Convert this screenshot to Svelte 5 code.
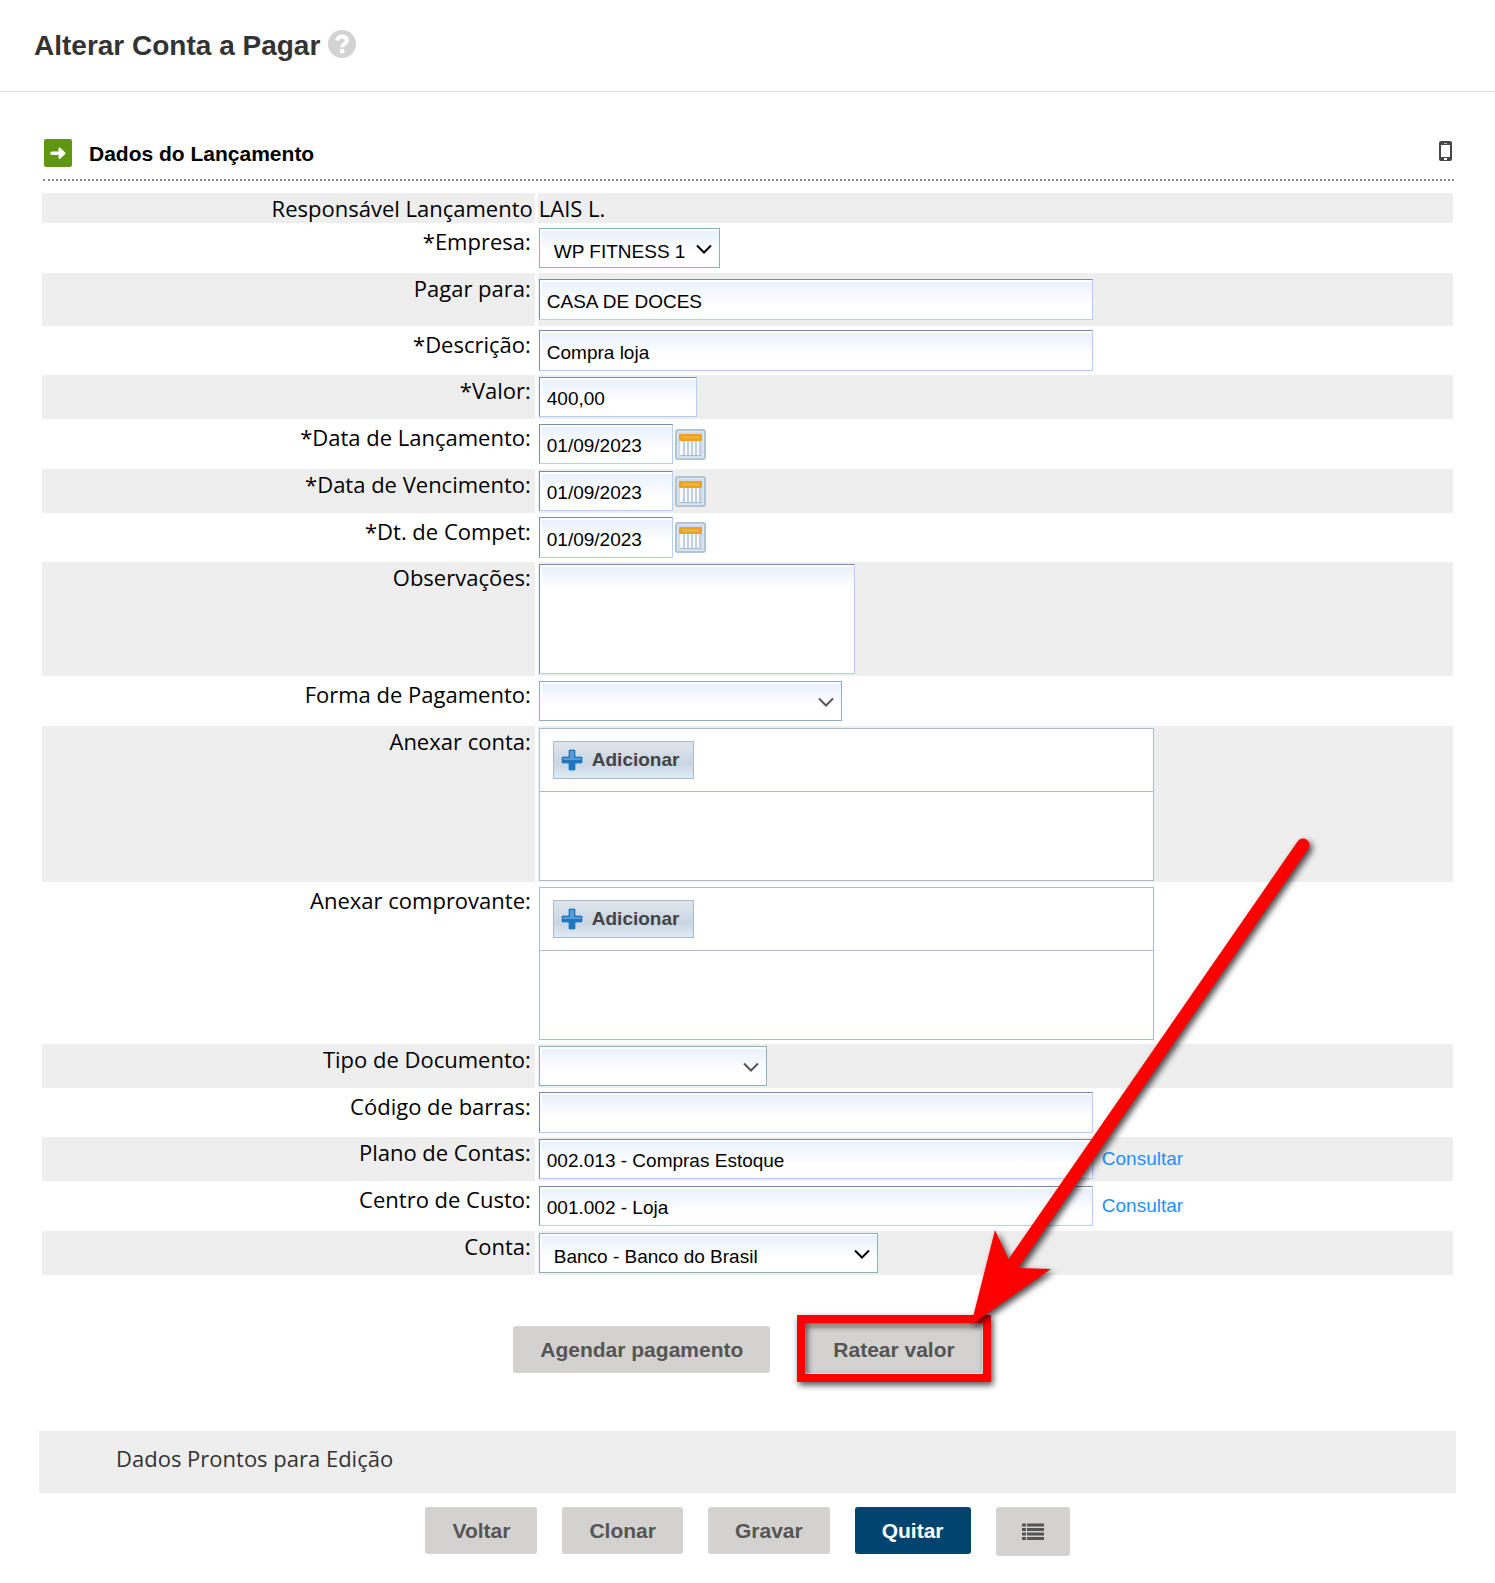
<script lang="ts">
  type Kind = 'static' | 'select' | 'text' | 'date' | 'area' | 'upload'

  interface Field {
    id: string
    label: string
    kind: Kind
    value?: string
    size?: string
    row?: string
    lookup?: boolean
  }

  const fields: Field[] = [
    { id: 'responsavel', label: 'Responsável Lançamento', kind: 'static', value: 'LAIS L.' },
    { id: 'empresa', label: '*Empresa:', kind: 'select', value: 'WP FITNESS 1', size: 'w-company' },
    { id: 'pagar-para', label: 'Pagar para:', kind: 'text', value: 'CASA DE DOCES', size: 'w-full', row: 'roomy' },
    { id: 'descricao', label: '*Descrição:', kind: 'text', value: 'Compra loja', size: 'w-full', row: 'snug' },
    { id: 'valor', label: '*Valor:', kind: 'text', value: '400,00', size: 'w-amount' },
    { id: 'data-lancamento', label: '*Data de Lançamento:', kind: 'date', value: '01/09/2023', size: 'w-date' },
    { id: 'data-vencimento', label: '*Data de Vencimento:', kind: 'date', value: '01/09/2023', size: 'w-date' },
    { id: 'data-competencia', label: '*Dt. de Compet:', kind: 'date', value: '01/09/2023', size: 'w-date', row: 'snug' },
    { id: 'observacoes', label: 'Observações:', kind: 'area', value: '' },
    { id: 'forma-pagamento', label: 'Forma de Pagamento:', kind: 'select', value: '', size: 'w-payment' },
    { id: 'anexar-conta', label: 'Anexar conta:', kind: 'upload', row: 'files' },
    { id: 'anexar-comprovante', label: 'Anexar comprovante:', kind: 'upload', row: 'files' },
    { id: 'tipo-documento', label: 'Tipo de Documento:', kind: 'select', value: '', size: 'w-document' },
    { id: 'codigo-barras', label: 'Código de barras:', kind: 'text', value: '', size: 'w-full', row: 'snug' },
    { id: 'plano-contas', label: 'Plano de Contas:', kind: 'text', value: '002.013 - Compras Estoque', size: 'w-full', lookup: true },
    { id: 'centro-custo', label: 'Centro de Custo:', kind: 'text', value: '001.002 - Loja', size: 'w-full', lookup: true },
    { id: 'conta', label: 'Conta:', kind: 'select', value: 'Banco - Banco do Brasil', size: 'w-account' },
  ]
</script>

{#snippet calendarIcon()}
  <svg width="31" height="31" viewBox="0 0 31 31" aria-hidden="true">
    <rect x="1" y="1" width="29" height="29" rx="2" fill="#cfdeec" stroke="#b2c3d4" stroke-width="2" />
    <rect x="2.5" y="2.5" width="26" height="26" rx="1" fill="none" stroke="#dce8f3" />
    <path d="M5 11h21v15H5z" fill="#f7fafd" />
    <path d="M9 12v14M13 12v14M17 12v14M21 12v14M25 12v14" stroke="#c3cfdc" stroke-width="2" />
    <path d="M5 26.5h21" stroke="#adbccc" />
    <rect x="4" y="5" width="23" height="7" rx="1" fill="#eba420" />
    <path d="M7 8.5h17" stroke="#f3b548" stroke-width="2" />
  </svg>
{/snippet}

<header class="page-header">
  <h1>Alterar Conta a Pagar</h1>
  <button class="icon-button" type="button" aria-label="Ajuda">
    <svg width="28" height="28" viewBox="0 0 28 28" aria-hidden="true">
      <circle cx="14" cy="14" r="14" fill="#d3d3d3" />
      <path d="M9 10.500c.8-2.800 2.600-4 5-4 2.800 0 4.800 1.500 4.800 3.900 0 3.400-4.700 3-4.700 6.800" fill="none" stroke="#fff" stroke-width="4" />
      <rect x="12" y="19" width="4.300" height="4.300" fill="#fff" />
    </svg>
  </button>
</header>

<main>
  <div class="section-title">
    <svg width="28" height="28" viewBox="0 0 28 28" aria-hidden="true">
      <rect width="28" height="28" rx="2" fill="#5f9712" />
      <path d="M8 14.200h8" stroke="#fff" stroke-width="3.500" stroke-linecap="round" />
      <path d="M15.500 9.500l5 4.700-5 4.700z" fill="#fff" stroke="#fff" stroke-width="2" stroke-linejoin="round" />
    </svg>
    <h2>Dados do Lançamento</h2>
    <button class="icon-button mobile" type="button" aria-label="Versão mobile">
      <svg width="13" height="20" viewBox="0 0 13 20" aria-hidden="true">
        <rect width="13" height="20" rx="2" fill="#474747" />
        <path d="M2 4h9v12H2z" fill="#fff" />
        <path d="M5 2.500h3" stroke="#bbb" />
        <rect x="5" y="17" width="3" height="2" fill="#fff" />
      </svg>
    </button>
  </div>

  <form>
    <div class="fields">
      {#each fields as field}
        <div class="row {field.row ?? ''}" class:static={field.kind === 'static'}>
          {#if field.kind === 'static' || field.kind === 'upload'}
            <span class="label" id={`${field.id}-label`}>{field.label}</span>
          {:else}
            <label class="label" for={field.id}>{field.label}</label>
          {/if}

          <div class="control">
            {#if field.kind === 'static'}
              <span>{field.value}</span>
            {:else if field.kind === 'select'}
              <div class="select {field.size}" class:empty={!field.value}>
                <select id={field.id}>
                  <option>{field.value}</option>
                </select>
                <svg width="16" height="10" viewBox="0 0 16 10" aria-hidden="true">
                  <path d="M1 1.500l7 7 7-7" fill="none" stroke="currentColor" stroke-width="2" />
                </svg>
              </div>
            {:else if field.kind === 'area'}
              <textarea id={field.id}></textarea>
            {:else if field.kind === 'upload'}
              <div class="upload" role="group" aria-labelledby={`${field.id}-label`}>
                <div class="upload-bar">
                  <button type="button" class="add">
                    <svg width="24" height="24" viewBox="0 0 24 24" aria-hidden="true">
                      <path d="M8 1h8v7h7v8h-7v7H8v-7H1V8h7z" fill="#f2f7fb" />
                      <path d="M9 2h6v7h7v6h-7v7H9v-7H2V9h7z" fill="#2176bf" stroke="#2176bf" />
                      <path d="M10 3h4v7h7v2H3v-2h7z" fill="#5a9cd3" />
                    </svg>
                    Adicionar
                  </button>
                </div>
              </div>
            {:else}
              <input id={field.id} class={field.size} type="text" value={field.value} />
              {#if field.kind === 'date'}
                <button class="icon-button" type="button" aria-label="Abrir calendário">
                  {@render calendarIcon()}
                </button>
              {/if}
              {#if field.lookup}
                <a class="lookup" href="#consultar">Consultar</a>
              {/if}
            {/if}
          </div>
        </div>
      {/each}
    </div>

    <div class="actions">
      <button type="button" class="btn">Agendar pagamento</button>
      <div class="highlighted">
        <button type="button" class="btn">Ratear valor</button>
        <div class="frame"></div>
        <svg class="arrow" width="360" height="510" viewBox="0 0 360 510" aria-hidden="true">
          <path d="M342 16L50 438" stroke="#f00" stroke-width="13" stroke-linecap="round" />
          <path d="M10 496L34 401l14 30 10 8 32 1z" fill="#f00" />
        </svg>
      </div>
    </div>

    <p class="status">Dados Prontos para Edição</p>

    <div class="footer">
      <button type="button" class="btn">Voltar</button>
      <button type="button" class="btn">Clonar</button>
      <button type="button" class="btn">Gravar</button>
      <button type="button" class="btn primary">Quitar</button>
      <button type="button" class="btn list" aria-label="Lista">
        <svg width="22" height="18" viewBox="0 0 22 18" aria-hidden="true">
          <path d="M0 2h4M5 2h17M0 6.500h4M5 6.500h17M0 11h4M5 11h17M0 15.500h4M5 15.500h17" stroke="#555" stroke-width="3" />
        </svg>
      </button>
    </div>
  </form>
</main>

<style>
  :global(body) {
    margin: 0;
    background: #fff;
    color: #000;
    font-family: Arial, "Liberation Sans", sans-serif;
  }

  *,
  *::before,
  *::after {
    box-sizing: border-box;
  }

  .page-header {
    display: flex;
    align-items: center;
    gap: 8px;
    height: 92px;
    padding: 0 34px 4px;
    border-bottom: 1px solid #ddd;
  }

  h1 {
    margin: 0;
    padding-top: 4px;
    color: #333;
    font-size: 28px;
    line-height: 32px;
  }

  .icon-button {
    display: flex;
    padding: 0;
    border: 0;
    background: none;
    cursor: pointer;
  }

  main {
    padding: 42px 39px 26px;
  }

  .section-title {
    display: flex;
    align-items: center;
    margin: 0 2px 12px 4px;
    padding: 5px 2px 12px 1px;
    border-bottom: 2px dotted #888;
  }

  h2 {
    margin: 0 0 0 17px;
    padding-top: 2px;
    font-size: 21px;
    line-height: 24px;
  }

  .mobile {
    margin-left: auto;
    padding-bottom: 4px;
  }

  .fields {
    display: flex;
    flex-direction: column;
    gap: 3px;
    margin: 0 3px;
    font-family: "Trebuchet MS", "Open Sans", sans-serif;
    font-size: 22px;
    line-height: 30px;
  }

  .row {
    display: grid;
    grid-template-columns: 35fr 65fr;
    column-gap: 3px;
  }

  .row:nth-child(odd) > * {
    background: #eee;
  }

  .label {
    padding-right: 4px;
    text-align: right;
  }

  .static .label {
    padding-right: 2px;
  }

  .control {
    display: flex;
    align-items: center;
    padding: 2px 1px;
  }

  .static .control {
    padding: 0 1px;
  }

  .roomy .control {
    padding: 6px 1px;
  }

  .snug .control {
    padding: 1px;
  }

  .files .control {
    padding-bottom: 1px;
  }

  input,
  select,
  textarea {
    height: 40px;
    margin: 0;
    padding: 4px 7px 0;
    border: 1px solid;
    border-color: #7b8aa5 #b5cef5 #b5cef5 #7b8aa5;
    border-radius: 0;
    outline: 0;
    background: #fff linear-gradient(#e9f1fe, #fff) 2px 2px / 100% 22px no-repeat;
    color: #000;
    font-family: Arial, "Liberation Sans", sans-serif;
    font-size: 19px;
  }

  .roomy input,
  .snug input {
    height: 41px;
  }

  textarea {
    width: 316px;
    height: 110px;
    resize: none;
  }

  .select {
    display: grid;
    align-items: center;
  }

  .select select {
    grid-area: 1 / 1;
    width: 100%;
    padding: 6px 30px 0 14px;
    border-color: #8cb0bd;
    appearance: none;
  }

  .select svg {
    grid-area: 1 / 1;
    justify-self: end;
    margin: 2px 8px 0 0;
    pointer-events: none;
  }

  .select.empty svg {
    color: #555;
  }

  .w-full {
    width: 554px;
  }

  .w-amount {
    width: 158px;
  }

  .w-date {
    width: 134px;
    margin-right: 2px;
  }

  .w-company {
    width: 181px;
  }

  .w-payment {
    width: 303px;
  }

  .w-document {
    width: 228px;
  }

  .w-account {
    width: 339px;
  }

  .upload {
    width: 615px;
    height: 153px;
    border: 1px solid #abbccf;
    background: #fff;
  }

  .upload-bar {
    padding: 12px 13px;
    border-bottom: 1px solid #abbccf;
  }

  .add {
    display: flex;
    align-items: center;
    gap: 8px;
    height: 38px;
    padding: 0 14px 0 6px;
    border: 1px solid #a6bbd0;
    background: linear-gradient(#e1e5ea, #c9d6e2 60%, #dfeaf4);
    color: #444;
    font: bold 19px Arial, "Liberation Sans", sans-serif;
    cursor: pointer;
  }

  .lookup {
    margin-left: 9px;
    color: #1e90ff;
    font-family: Arial, "Liberation Sans", sans-serif;
    font-size: 19px;
    text-decoration: none;
  }

  .actions {
    display: flex;
    justify-content: center;
    gap: 36px;
    margin-top: 51px;
  }

  .btn {
    height: 47px;
    padding: 0 27px;
    border: 0;
    border-radius: 3px;
    background: #d4d2d0;
    color: #555;
    font: bold 21px Arial, "Liberation Sans", sans-serif;
    cursor: pointer;
  }

  .btn.primary {
    background: #00456f;
    color: #fff;
  }

  .highlighted {
    position: relative;
  }

  .frame {
    position: absolute;
    inset: -11px -9px -9px;
    border: 8px solid #f00;
    filter: drop-shadow(2px 3px 3px rgba(0, 0, 0, 0.7));
    pointer-events: none;
  }

  .arrow {
    position: absolute;
    left: 155px;
    bottom: 34px;
    filter: drop-shadow(3px 3px 3px rgba(0, 0, 0, 0.7));
    pointer-events: none;
  }

  .status {
    margin: 58px 0 14px;
    padding: 12px 77px 20px;
    background: #eee;
    color: #333;
    font-family: "Trebuchet MS", "Open Sans", sans-serif;
    font-size: 22px;
    line-height: 30px;
  }

  .footer {
    display: flex;
    justify-content: center;
    align-items: flex-start;
    gap: 25px;
  }

  .btn.list {
    display: flex;
    align-items: center;
    height: 49px;
    padding: 0 26px;
  }
</style>
